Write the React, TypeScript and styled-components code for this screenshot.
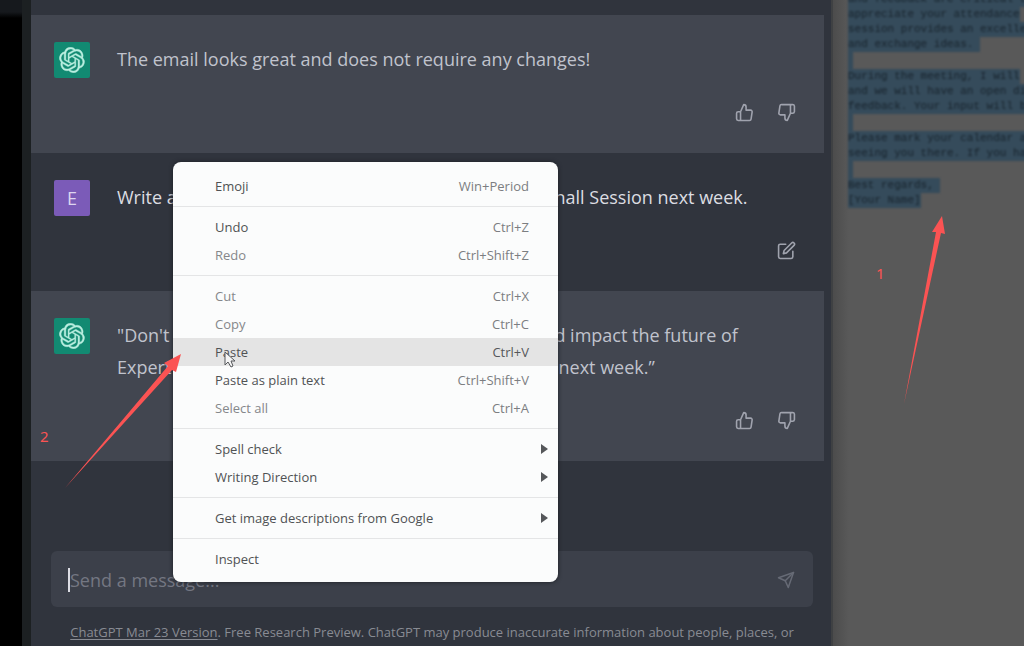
import React from "react";
import styled, { createGlobalStyle } from "styled-components";
import { FiThumbsUp, FiThumbsDown, FiEdit, FiSend } from "react-icons/fi";

const RED = "#fb5353";

const GlobalStyle = createGlobalStyle`
  * { box-sizing: border-box; }
  body { margin: 0; background: #000; font-family: "Open Sans", "Noto Sans", sans-serif; }
  button { border: 0; padding: 0; background: none; font: inherit; color: inherit; }
`;

const Screen = styled.div`
  position: relative;
  display: grid;
  grid-template-columns: 22px 9px minmax(0, 802fr) minmax(0, 191fr);
  height: 100vh;
  overflow: hidden;
`;

const DesktopEdge = styled.div`
  background: linear-gradient(#16191d 0 12px, #000 18px);
`;

const WindowEdge = styled.div`
  background: #1c2022;
`;

const Chat = styled.main`
  display: flex;
  flex-direction: column;
  min-height: 0;
  padding-top: 15px;
  background: #30343d;
  border-right: 2px solid #3f4143;
`;

const Message = styled.article<{ $assistant?: boolean }>`
  display: grid;
  grid-template-columns: 36px minmax(0, 1fr);
  column-gap: 27px;
  margin-right: 7px;
  padding: 27px 28px 27px 23px;
  color: ${(p) => (p.$assistant ? "#c0c3cd" : "#dcdde2")};
  background: ${(p) => (p.$assistant ? "#424650" : "transparent")};
`;

const Avatar = styled.div<{ $color: string }>`
  display: grid;
  place-items: center;
  grid-row: span 2;
  width: 36px;
  height: 36px;
  border-radius: 2px;
  color: #ddd5f0;
  background: ${(p) => p.$color};
  font-size: 18px;
`;

const Body = styled.p`
  margin: 1px 0 0;
  font-size: 18px;
  line-height: 32px;
  white-space: pre-line;
`;

const Actions = styled.div`
  grid-column: 2;
  display: flex;
  justify-content: flex-end;
  gap: 23px;
  margin-top: 23px;
  color: #a0a3ae;
`;

const IconButton = styled.button`
  display: grid;
  place-items: center;
  width: 19px;
  height: 28px;
`;

const Footer = styled.footer`
  margin: auto 18px 0 20px;
`;

const Composer = styled.form`
  display: flex;
  align-items: center;
  height: 56px;
  padding: 2px 18px 0 17px;
  border-radius: 6px;
  background: #3c404a;
  color: #666a75;
`;

const Caret = styled.span`
  width: 2px;
  height: 24px;
  background: #dcdde4;
`;

const MessageInput = styled.input`
  flex: 1;
  min-width: 0;
  padding: 0;
  border: 0;
  outline: 0;
  background: none;
  color: #dcdde4;
  font: 18px "Open Sans", "Noto Sans", sans-serif;
  &::placeholder { color: #747782; opacity: 1; }
`;

const Notice = styled.p`
  height: 39px;
  margin: 0;
  padding: 15px 12px 0;
  color: #888b93;
  font-size: 13px;
  line-height: 20px;
  text-align: center;
  a { color: inherit; text-underline-offset: 2px; }
`;

const Document = styled.aside`
  min-width: 0;
  overflow: hidden;
  padding-left: 15px;
  background: linear-gradient(90deg, #4c4c4c, #595959 16px);
`;

const Letter = styled.div`
  margin-top: -8px;
  font-family: "Liberation Mono", monospace;
  font-size: 11px;
  color: #17222b;
  filter: blur(1px);
`;

const LetterLine = styled.div<{ $blank?: boolean }>`
  width: max-content;
  min-width: 5px;
  height: ${(p) => (p.$blank ? 17 : 15)}px;
  line-height: 15px;
  white-space: pre;
  background: #354b5b;
`;

const Menu = styled.div`
  position: absolute;
  top: 162px;
  left: 173px;
  width: 385px;
  padding: 10px 0 9px;
  border-radius: 8px;
  background: #fbfcfc;
  box-shadow: 0 0 4px #1b1e24;
`;

const MenuItem = styled.button<{ $dim?: boolean; $active?: boolean }>`
  display: flex;
  align-items: center;
  justify-content: space-between;
  width: 100%;
  height: 28px;
  padding: 0 29px 0 42px;
  font-size: 13px;
  line-height: 20px;
  text-align: left;
  color: ${(p) => (p.$dim ? "#85878a" : "#505254")};
  background: ${(p) => (p.$active ? "#e4e4e4" : "transparent")};
`;

const Shortcut = styled.span<{ $dark?: boolean }>`
  color: ${(p) => (p.$dark ? "#55575a" : "#7c7e81")};
`;

const Submenu = styled.span`
  width: 0;
  margin-right: -19px;
  border: solid transparent;
  border-width: 5px 0 5px 7px;
  border-left-color: #55575a;
`;

const Separator = styled.hr`
  height: 1px;
  margin: 6px 0;
  border: 0;
  background: #e4e5e6;
`;

const Annotations = styled.svg`
  position: absolute;
  top: 0;
  left: 0;
  width: 1024px;
  height: 646px;
  pointer-events: none;
`;

const Step = styled.span<{ $x: number; $y: number }>`
  position: absolute;
  left: ${(p) => p.$x}px;
  top: ${(p) => p.$y}px;
  color: ${RED};
  font: 15px/20px "Noto Sans", sans-serif;
`;

const KNOT =
  "M37.532 16.87a9.963 9.963 0 0 0-.856-8.184 10.078 10.078 0 0 0-10.855-4.835A9.964 9.964 0 0 0 18.306.5a10.079 10.079 0 0 0-9.614 6.977 9.967 9.967 0 0 0-6.664 4.834 10.08 10.08 0 0 0 1.24 11.817 9.965 9.965 0 0 0 .856 8.185 10.079 10.079 0 0 0 10.855 4.835 9.965 9.965 0 0 0 7.516 3.35 10.078 10.078 0 0 0 9.617-6.981 9.967 9.967 0 0 0 6.663-4.834 10.079 10.079 0 0 0-1.243-11.813zM22.498 37.886a7.474 7.474 0 0 1-4.799-1.735c.061-.033.168-.091.237-.134l7.964-4.6a1.294 1.294 0 0 0 .655-1.134V19.054l3.366 1.944a.12.12 0 0 1 .066.092v9.299a7.505 7.505 0 0 1-7.49 7.496zM6.392 31.006a7.471 7.471 0 0 1-.894-5.023c.06.036.162.099.237.141l7.964 4.6a1.297 1.297 0 0 0 1.308 0l9.724-5.614v3.888a.12.12 0 0 1-.048.103l-8.051 4.649a7.504 7.504 0 0 1-10.24-2.744zM4.297 13.62A7.469 7.469 0 0 1 8.2 10.333c0 .068-.004.19-.004.274v9.201a1.294 1.294 0 0 0 .654 1.132l9.723 5.614-3.366 1.944a.12.12 0 0 1-.114.01L7.04 23.856a7.504 7.504 0 0 1-2.743-10.237zm27.658 6.437-9.724-5.615 3.367-1.943a.121.121 0 0 1 .113-.01l8.052 4.648a7.498 7.498 0 0 1-1.158 13.528v-9.476a1.293 1.293 0 0 0-.65-1.132zm3.35-5.043a10.98 10.98 0 0 0-.236-.141l-7.965-4.6a1.298 1.298 0 0 0-1.308 0l-9.723 5.614v-3.888a.12.12 0 0 1 .048-.103l8.05-4.645a7.497 7.497 0 0 1 11.135 7.763zm-21.063 6.929-3.367-1.944a.12.12 0 0 1-.065-.092v-9.299a7.497 7.497 0 0 1 12.293-5.756 6.94 6.94 0 0 0-.236.134l-7.965 4.6a1.294 1.294 0 0 0-.654 1.132l-.006 11.225zm1.829-3.943 4.33-2.501 4.332 2.5v5l-4.331 2.5-4.331-2.5V18z";

function AssistantAvatar() {
  return (
    <Avatar $color="#128a72">
      <svg width="26" height="26" viewBox="0 0 41 41" role="img" aria-label="ChatGPT">
        <path d={KNOT} fill="#b9eee0" stroke="#b9eee0" strokeWidth="0.6" />
      </svg>
    </Avatar>
  );
}

function Feedback() {
  return (
    <Actions>
      <IconButton aria-label="Good response"><FiThumbsUp size={19} /></IconButton>
      <IconButton aria-label="Bad response"><FiThumbsDown size={19} /></IconButton>
    </Actions>
  );
}

type Entry = { label: string; keys?: string; dim?: boolean; active?: boolean; submenu?: boolean };

const menuGroups: Entry[][] = [
  [{ label: "Emoji", keys: "Win+Period" }],
  [{ label: "Undo", keys: "Ctrl+Z" }, { label: "Redo", keys: "Ctrl+Shift+Z", dim: true }],
  [
    { label: "Cut", keys: "Ctrl+X", dim: true },
    { label: "Copy", keys: "Ctrl+C", dim: true },
    { label: "Paste", keys: "Ctrl+V", active: true },
    { label: "Paste as plain text", keys: "Ctrl+Shift+V" },
    { label: "Select all", keys: "Ctrl+A", dim: true },
  ],
  [{ label: "Spell check", submenu: true }, { label: "Writing Direction", submenu: true }],
  [{ label: "Get image descriptions from Google", submenu: true }],
  [{ label: "Inspect" }],
];

const letter = [
  "and feedback are critical to",
  "appreciate your attendance",
  "session provides an excellent",
  "and exchange ideas. ",
  "",
  "During the meeting, I will",
  "and we will have an open discussion",
  "feedback. Your input will be",
  "",
  "Please mark your calendar and",
  "seeing you there. If you have",
  "",
  "Best regards, ",
  "[Your Name]",
];

export default function App() {
  return (
    <Screen>
      <GlobalStyle />
      <DesktopEdge />
      <WindowEdge />
      <Chat>
        <Message $assistant>
          <AssistantAvatar />
          <Body>The email looks great and does not require any changes!</Body>
          <Feedback />
        </Message>
        <Message>
          <Avatar $color="#7b5bb8">E</Avatar>
          <Body>Write a short catchy subject line for the Expert Townhall Session next week.</Body>
          <Actions>
            <IconButton aria-label="Edit message"><FiEdit size={19} /></IconButton>
          </Actions>
        </Message>
        <Message $assistant>
          <AssistantAvatar />
          <Body>{"\"Don't miss out on your chance to connect, share and impact the future of\nExpert Service - be sure to join our Townhall Session next week.”"}</Body>
          <Feedback />
        </Message>
        <Footer>
          <Composer onSubmit={(e) => e.preventDefault()}>
            <Caret />
            <MessageInput aria-label="Message" placeholder="Send a message..." />
            <IconButton aria-label="Send"><FiSend size={18} /></IconButton>
          </Composer>
          <Notice>
            <a href="#release-notes">ChatGPT Mar 23 Version</a>. Free Research Preview. ChatGPT may
            produce inaccurate information about people, places, or facts.
          </Notice>
        </Footer>
      </Chat>
      <Document>
        <Letter>
          {letter.map((line, i) => (
            <LetterLine key={i} $blank={!line}>{line}</LetterLine>
          ))}
        </Letter>
      </Document>

      <Menu>
        {menuGroups.map((group, g) => (
          <React.Fragment key={g}>
            {g > 0 && <Separator />}
            {group.map((item) => (
              <MenuItem key={item.label} $dim={item.dim} $active={item.active}>
                {item.label}
                {item.keys && <Shortcut $dark={item.active}>{item.keys}</Shortcut>}
                {item.submenu && <Submenu />}
              </MenuItem>
            ))}
          </React.Fragment>
        ))}
      </Menu>

      <Annotations viewBox="0 0 1024 646" aria-hidden="true">
        <path d="M225 352v13l3-3 3 5 2-1-2-5h4z" fill="#f4f4f4" stroke="#55575a" />
        <path d="M65 488 168 366 164 363 181 354 176 372 172 370z" fill={RED} />
        <path d="M904 404 936 232 932 232 942 216 945 234 941 233z" fill={RED} />
      </Annotations>
      <Step $x={876} $y={263}>1</Step>
      <Step $x={40} $y={426}>2</Step>
    </Screen>
  );
}
